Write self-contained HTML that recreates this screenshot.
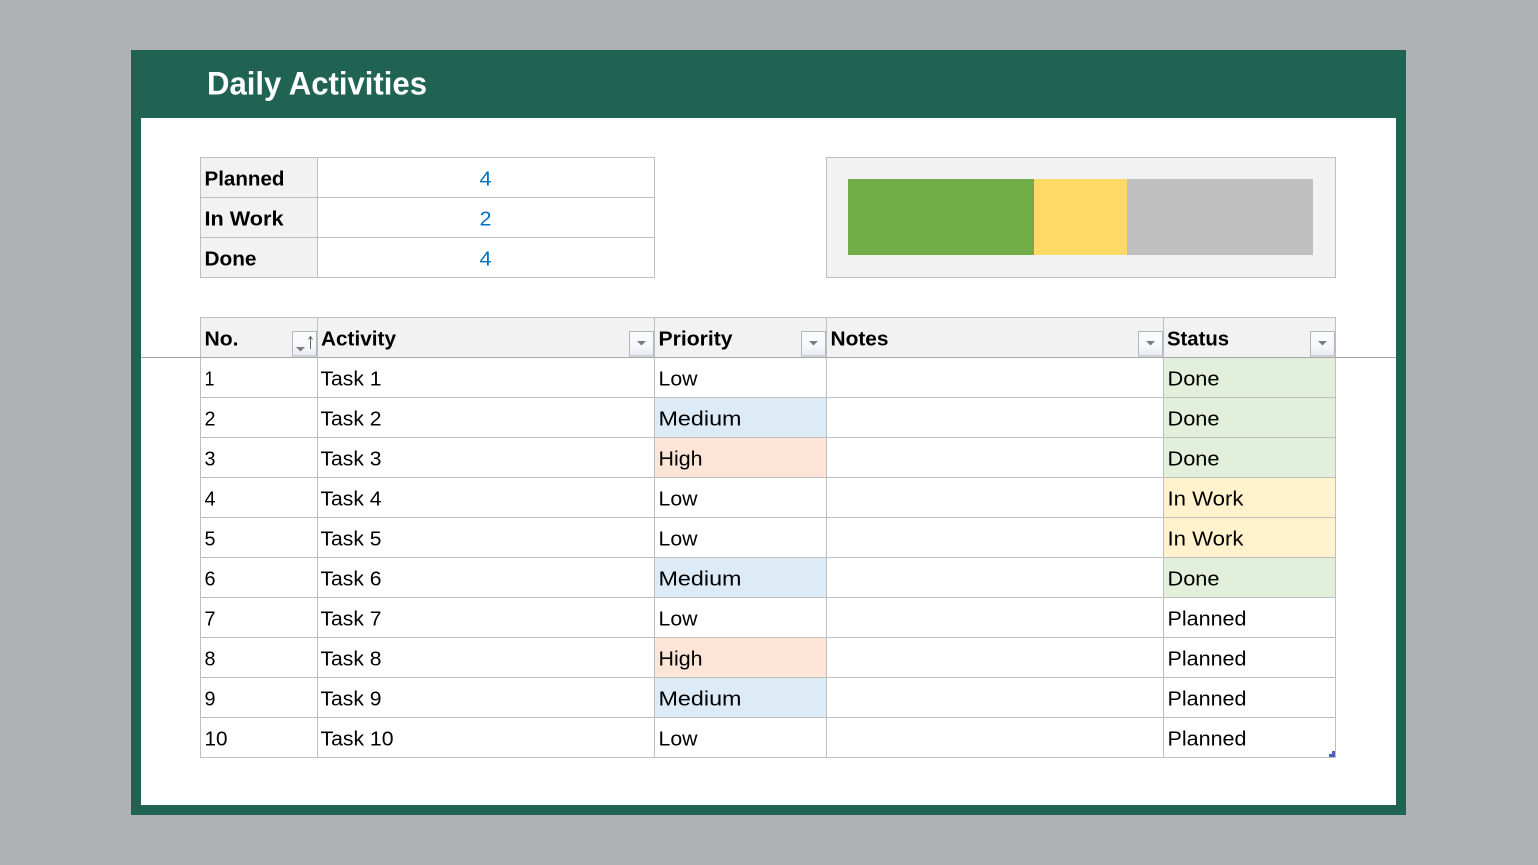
<!DOCTYPE html>
<html lang="en"><head><meta charset="utf-8"><title>Daily Activities</title>
<style>
html,body{margin:0;padding:0;width:1538px;height:865px;overflow:hidden;background:#b0b1b3}
svg{display:block;position:absolute;left:0;top:0}
text{font-family:"Liberation Sans",sans-serif;font-size:20px;fill:#000;transform:translate(-.5px,-.5px)}
.b{font-weight:bold}
.d{fill:#0070c0}
.t{font-size:32px;font-weight:bold;fill:#fff}
rect{shape-rendering:crispEdges}
</style></head><body>
<svg width="1538" height="865" viewBox="0 0 1538 865" xmlns="http://www.w3.org/2000/svg">
<defs>
<linearGradient id="g" x1="0" y1="0" x2="0" y2="1"><stop offset="0" stop-color="#fbfcfe"/><stop offset="0.6" stop-color="#f7f8fb"/><stop offset="1" stop-color="#e6e9f0"/></linearGradient>
<g id="btn"><rect x="0.5" y="0.5" width="24" height="24.500" fill="url(#g)" stroke="#b2b6bd" style="shape-rendering:crispEdges"/></g>
<g id="arr"><path d="M8 10h9l-4.500 4.500z" fill="#7c7c7c"/></g>
</defs>
<rect x="0" y="0" width="1538" height="865" fill="#b0b1b3"/>
<rect x="131" y="50" width="1275" height="765" fill="#216352"/>
<rect x="141" y="118" width="1255" height="687" fill="#fff"/>
<text class="t" x="207.500" y="95" textLength="220" lengthAdjust="spacingAndGlyphs">Daily Activities</text>

<!-- summary -->
<rect x="200" y="157" width="117" height="120" fill="#f2f2f2"/>
<rect x="200" y="157" width="455" height="1" fill="#bfbfbf"/>
<rect x="200" y="197" width="455" height="1" fill="#bfbfbf"/>
<rect x="200" y="237" width="455" height="1" fill="#bfbfbf"/>
<rect x="200" y="277" width="455" height="1" fill="#bfbfbf"/>
<rect x="200" y="157" width="1" height="121" fill="#bfbfbf"/>
<rect x="317" y="157" width="1" height="121" fill="#bfbfbf"/>
<rect x="654" y="157" width="1" height="121" fill="#bfbfbf"/>
<text class="b" x="205" y="186" textLength="80" lengthAdjust="spacingAndGlyphs">Planned</text>
<text class="b" x="205" y="226" textLength="79" lengthAdjust="spacingAndGlyphs">In Work</text>
<text class="b" x="205" y="266" textLength="52" lengthAdjust="spacingAndGlyphs">Done</text>
<text class="d" x="480" y="186" textLength="12" lengthAdjust="spacingAndGlyphs">4</text>
<text class="d" x="480" y="226" textLength="12" lengthAdjust="spacingAndGlyphs">2</text>
<text class="d" x="480" y="266" textLength="12" lengthAdjust="spacingAndGlyphs">4</text>

<!-- chart -->
<rect x="826" y="157" width="510" height="121" fill="#bfbfbf"/>
<rect x="827" y="158" width="508" height="119" fill="#f2f2f2"/>
<rect x="848" y="179" width="186" height="76" fill="#70ad47"/>
<rect x="1034" y="179" width="93" height="76" fill="#ffd966"/>
<rect x="1127" y="179" width="186" height="76" fill="#bfbfbf"/>

<!-- table fills -->
<rect x="200" y="317" width="1135" height="40" fill="#f2f2f2"/>
<rect x="655" y="398" width="171" height="39" fill="#ddebf7"/>
<rect x="655" y="438" width="171" height="39" fill="#fce4d6"/>
<rect x="655" y="558" width="171" height="39" fill="#ddebf7"/>
<rect x="655" y="638" width="171" height="39" fill="#fce4d6"/>
<rect x="655" y="678" width="171" height="39" fill="#ddebf7"/>
<rect x="1164" y="358" width="171" height="119" fill="#e2efda"/>
<rect x="1164" y="478" width="171" height="79" fill="#fff2cc"/>
<rect x="1164" y="558" width="171" height="39" fill="#e2efda"/>

<!-- horizontal lines -->
<rect x="200" y="317" width="1136" height="1" fill="#bfbfbf"/>
<rect x="200" y="397" width="1136" height="1" fill="#bfbfbf"/>
<rect x="200" y="437" width="1136" height="1" fill="#bfbfbf"/>
<rect x="200" y="477" width="1136" height="1" fill="#bfbfbf"/>
<rect x="200" y="517" width="1136" height="1" fill="#bfbfbf"/>
<rect x="200" y="557" width="1136" height="1" fill="#bfbfbf"/>
<rect x="200" y="597" width="1136" height="1" fill="#bfbfbf"/>
<rect x="200" y="637" width="1136" height="1" fill="#bfbfbf"/>
<rect x="200" y="677" width="1136" height="1" fill="#bfbfbf"/>
<rect x="200" y="717" width="1136" height="1" fill="#bfbfbf"/>
<rect x="200" y="757" width="1136" height="1" fill="#bfbfbf"/>
<!-- vertical lines -->
<rect x="200" y="317" width="1" height="441" fill="#bfbfbf"/>
<rect x="317" y="317" width="1" height="441" fill="#bfbfbf"/>
<rect x="654" y="317" width="1" height="441" fill="#bfbfbf"/>
<rect x="826" y="317" width="1" height="441" fill="#bfbfbf"/>
<rect x="1163" y="317" width="1" height="441" fill="#bfbfbf"/>
<rect x="1335" y="317" width="1" height="441" fill="#bfbfbf"/>
<rect x="141" y="357" width="1255" height="1" fill="#a6a6a6"/>

<!-- header text -->
<text class="b" x="205" y="346" textLength="34" lengthAdjust="spacingAndGlyphs">No.</text>
<text class="b" x="321.500" y="346" textLength="75" lengthAdjust="spacingAndGlyphs">Activity</text>
<text class="b" x="659" y="346" textLength="74" lengthAdjust="spacingAndGlyphs">Priority</text>
<text class="b" x="831" y="346" textLength="58" lengthAdjust="spacingAndGlyphs">Notes</text>
<text class="b" x="1167.500" y="346" textLength="62" lengthAdjust="spacingAndGlyphs">Status</text>

<!-- filter buttons -->
<use href="#btn" x="292" y="331"/>
<path d="M296 347h9l-4.500 4.500z" fill="#7c7c7c"/>
<path d="M310.500 349V337M308.500 339.500L310.500 336.500L312.500 339.500" fill="none" stroke="#666" stroke-width="1"/>
<use href="#btn" x="629" y="331"/><use href="#arr" x="629" y="331"/>
<use href="#btn" x="801" y="331"/><use href="#arr" x="801" y="331"/>
<use href="#btn" x="1138" y="331"/><use href="#arr" x="1138" y="331"/>
<use href="#btn" x="1310" y="331"/><use href="#arr" x="1310" y="331"/>

<!-- rows -->
<text x="205" y="386" textLength="10" lengthAdjust="spacingAndGlyphs">1</text><text x="321" y="386" textLength="61" lengthAdjust="spacingAndGlyphs">Task 1</text><text x="659" y="386" textLength="39" lengthAdjust="spacingAndGlyphs">Low</text><text x="1168" y="386" textLength="52" lengthAdjust="spacingAndGlyphs">Done</text>
<text x="205" y="426" textLength="11" lengthAdjust="spacingAndGlyphs">2</text><text x="321" y="426" textLength="61" lengthAdjust="spacingAndGlyphs">Task 2</text><text x="659" y="426" textLength="83" lengthAdjust="spacingAndGlyphs">Medium</text><text x="1168" y="426" textLength="52" lengthAdjust="spacingAndGlyphs">Done</text>
<text x="205" y="466" textLength="11" lengthAdjust="spacingAndGlyphs">3</text><text x="321" y="466" textLength="61" lengthAdjust="spacingAndGlyphs">Task 3</text><text x="659" y="466" textLength="44" lengthAdjust="spacingAndGlyphs">High</text><text x="1168" y="466" textLength="52" lengthAdjust="spacingAndGlyphs">Done</text>
<text x="205" y="506" textLength="11" lengthAdjust="spacingAndGlyphs">4</text><text x="321" y="506" textLength="61" lengthAdjust="spacingAndGlyphs">Task 4</text><text x="659" y="506" textLength="39" lengthAdjust="spacingAndGlyphs">Low</text><text x="1168" y="506" textLength="76" lengthAdjust="spacingAndGlyphs">In Work</text>
<text x="205" y="546" textLength="11" lengthAdjust="spacingAndGlyphs">5</text><text x="321" y="546" textLength="61" lengthAdjust="spacingAndGlyphs">Task 5</text><text x="659" y="546" textLength="39" lengthAdjust="spacingAndGlyphs">Low</text><text x="1168" y="546" textLength="76" lengthAdjust="spacingAndGlyphs">In Work</text>
<text x="205" y="586" textLength="11" lengthAdjust="spacingAndGlyphs">6</text><text x="321" y="586" textLength="61" lengthAdjust="spacingAndGlyphs">Task 6</text><text x="659" y="586" textLength="83" lengthAdjust="spacingAndGlyphs">Medium</text><text x="1168" y="586" textLength="52" lengthAdjust="spacingAndGlyphs">Done</text>
<text x="205" y="626" textLength="11" lengthAdjust="spacingAndGlyphs">7</text><text x="321" y="626" textLength="61" lengthAdjust="spacingAndGlyphs">Task 7</text><text x="659" y="626" textLength="39" lengthAdjust="spacingAndGlyphs">Low</text><text x="1168" y="626" textLength="79" lengthAdjust="spacingAndGlyphs">Planned</text>
<text x="205" y="666" textLength="11" lengthAdjust="spacingAndGlyphs">8</text><text x="321" y="666" textLength="61" lengthAdjust="spacingAndGlyphs">Task 8</text><text x="659" y="666" textLength="44" lengthAdjust="spacingAndGlyphs">High</text><text x="1168" y="666" textLength="79" lengthAdjust="spacingAndGlyphs">Planned</text>
<text x="205" y="706" textLength="11" lengthAdjust="spacingAndGlyphs">9</text><text x="321" y="706" textLength="61" lengthAdjust="spacingAndGlyphs">Task 9</text><text x="659" y="706" textLength="83" lengthAdjust="spacingAndGlyphs">Medium</text><text x="1168" y="706" textLength="79" lengthAdjust="spacingAndGlyphs">Planned</text>
<text x="205" y="746" textLength="23" lengthAdjust="spacingAndGlyphs">10</text><text x="321" y="746" textLength="73" lengthAdjust="spacingAndGlyphs">Task 10</text><text x="659" y="746" textLength="39" lengthAdjust="spacingAndGlyphs">Low</text><text x="1168" y="746" textLength="79" lengthAdjust="spacingAndGlyphs">Planned</text>

<!-- resize handle -->
<rect x="1329" y="754" width="6" height="3" fill="#4a5fb8"/>
<rect x="1332" y="751" width="3" height="3" fill="#4a5fb8"/>
</svg>
</body></html>
